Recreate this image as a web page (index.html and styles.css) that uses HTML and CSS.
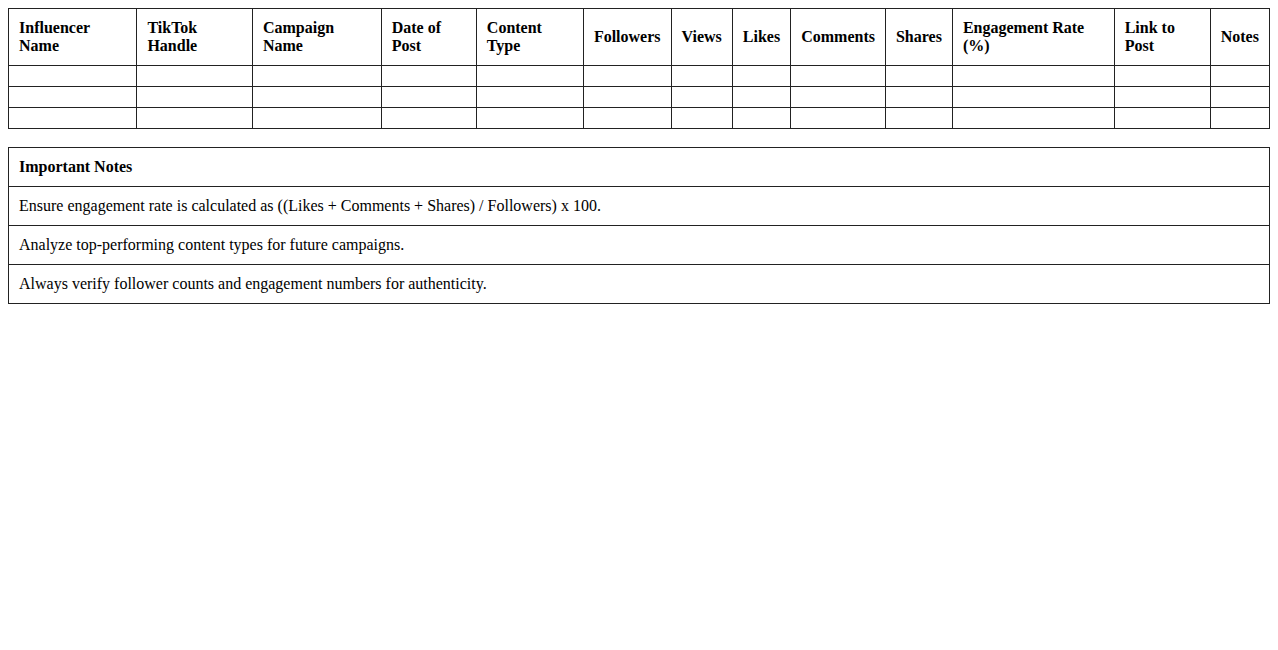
FILE: index.html
```html
<!DOCTYPE html>
<html>
<head>
<meta charset="utf-8">
<link rel="stylesheet" href="styles.css">
</head>
<body>
<table class="grid">
  <thead>
    <tr>
      <th>Influencer Name</th>
      <th>TikTok Handle</th>
      <th>Campaign Name</th>
      <th>Date of Post</th>
      <th>Content Type</th>
      <th>Followers</th>
      <th>Views</th>
      <th>Likes</th>
      <th>Comments</th>
      <th>Shares</th>
      <th>Engagement Rate (%)</th>
      <th>Link to Post</th>
      <th>Notes</th>
    </tr>
  </thead>
  <tbody>
    <tr><td></td><td></td><td></td><td></td><td></td><td></td><td></td><td></td><td></td><td></td><td></td><td></td><td></td></tr>
    <tr><td></td><td></td><td></td><td></td><td></td><td></td><td></td><td></td><td></td><td></td><td></td><td></td><td></td></tr>
    <tr><td></td><td></td><td></td><td></td><td></td><td></td><td></td><td></td><td></td><td></td><td></td><td></td><td></td></tr>
  </tbody>
</table>
<table class="grid notes">
  <thead>
    <tr><th>Important Notes</th></tr>
  </thead>
  <tbody>
    <tr><td>Ensure engagement rate is calculated as ((Likes + Comments + Shares) / Followers) x 100.</td></tr>
    <tr><td>Analyze top-performing content types for future campaigns.</td></tr>
    <tr><td>Always verify follower counts and engagement numbers for authenticity.</td></tr>
  </tbody>
</table>
</body>
</html>
```
FILE: styles.css
```css
body {
  margin: 8px;
  font-family: "Liberation Serif", "Times New Roman", serif;
  font-size: 16px;
  color: #000;
  background: #fff;
}
.grid {
  width: 100%;
  border-collapse: collapse;
  margin-bottom: 18px;
}
.grid th,
.grid td {
  border: 1px solid #222;
  padding: 10px;
  text-align: left;
  line-height: 18px;
}
.grid th {
  font-weight: bold;
}
```
